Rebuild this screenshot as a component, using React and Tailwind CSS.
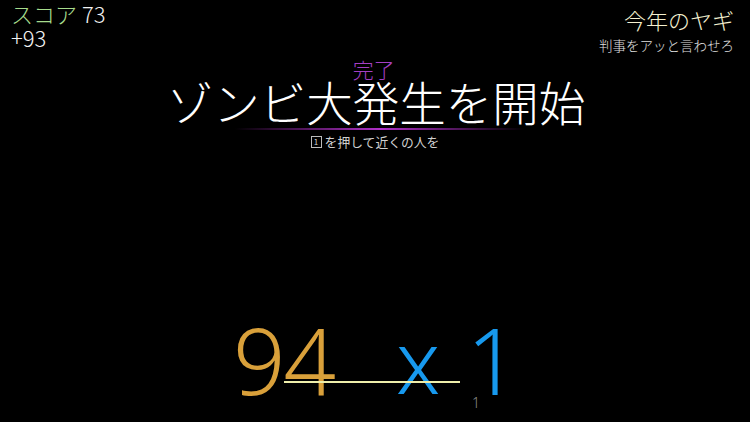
export default function App() {
  const jp = { fontFamily: '"Noto Sans CJK JP", "Noto Sans", sans-serif' }

  return (
    <div className="w-[750px] h-[422px] bg-black text-white overflow-hidden flex flex-col" style={jp}>
      {/* top bar */}
      <div className="flex justify-between px-[11px] pt-[1px]">
        <div className="text-[22px] leading-[24px] font-light">
          <div>
            <span className="text-[#a6dc8c]">スコア</span>
            <span className="text-[#f2f2f2]"> 73</span>
          </div>
          <div className="text-[#f2f2f2]">+93</div>
        </div>
        <div className="flex flex-col items-end pt-[5px] pr-[5px] font-light">
          <div className="text-[22px] leading-[26px] text-[#f4f0d0]">今年のヤギ</div>
          <div className="text-[13.5px] leading-[18px] mt-[4px] text-[#e0e0e0]">判事をアッと言わせろ</div>
        </div>
      </div>

      {/* title */}
      <div className="flex flex-col items-center mt-[22px]">
        <div className="text-[46.5px] leading-[50px] font-light pl-[2px]">
          ゾンビ大
          <span className="relative">
            <span className="absolute left-0 -top-[10px] text-[21px] leading-[24px] text-[#a43fc4] whitespace-nowrap">完了</span>
            発
          </span>
          生を開始
        </div>
        <div className="h-[2px] w-[290px] mt-[2px] ml-[10px] bg-gradient-to-r from-transparent via-[#b030c8] to-transparent" />
        <div className="flex items-center gap-[3px] mt-[4px] text-[12.8px] leading-[15px] text-[#d0d0d0]">
          <span className="inline-flex items-center justify-center w-[11px] h-[12px] border border-[#bbbbbb] text-[8px] leading-none">1</span>
          <span>を押して近くの人を</span>
        </div>
      </div>

      <div className="flex-1" />

      {/* multiplier */}
      <div className="relative flex justify-center items-end pb-[17px] ml-[2px]" style={{ fontFamily: '"Noto Sans", sans-serif' }}>
        <div className="relative flex items-end font-light leading-[90px]">
          <span className="text-[92px] text-[#d9a03a] tracking-[-2px]">94</span>
          <span className="text-[88px] text-[#1799ee] ml-[62px]">x</span>
          <span className="text-[92px] text-[#1799ee] ml-[26px]">1</span>
          <div className="absolute left-[51px] bottom-[22px] w-[176px] h-[2px] bg-[#eeeeaa]" />
          <span className="absolute left-[239px] -bottom-[6px] text-[14px] leading-[16px] text-[#8a8a8a]">1</span>
        </div>
      </div>
    </div>
  )
}
